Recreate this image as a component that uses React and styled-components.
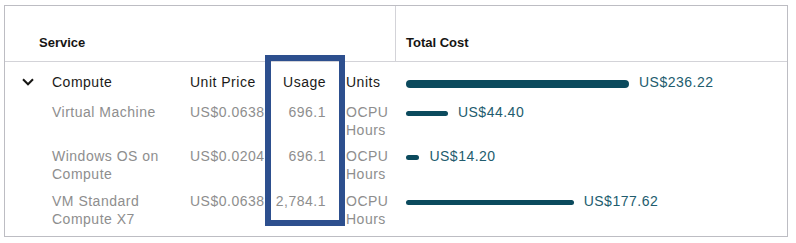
import React from "react";
import styled, { createGlobalStyle } from "styled-components";

const Global = createGlobalStyle`
  html, body { margin: 0; padding: 0; background: #ffffff; }
  body { padding: 5px 0 0 4px; font-family: "Liberation Sans", Arial, sans-serif; }
`;

const COLS = "47px 138px 80px 56px 70px 1fr";
const SCALE = 0.944;

const Table = styled.div`
  position: relative;
  width: 784px;
  box-sizing: border-box;
  border: 1px solid #bdbdc3;
  background: #fff;
`;

const Header = styled.div`
  display: grid;
  grid-template-columns: 391px 1fr;
  height: 56px;
  box-sizing: border-box;
  border-bottom: 1px solid #d3d3d8;
`;

const HeadCell = styled.div`
  display: flex;
  align-items: flex-end;
  padding: 0 0 10px ${(p) => p.$pad}px;
  font-size: 13px;
  line-height: 16px;
  font-weight: 700;
  color: #161513;
  border-right: ${(p) => (p.$divider ? "1px solid #d3d3d8" : "none")};
`;

const Body = styled.div`
  padding-bottom: 4px;
`;

const Row = styled.div`
  display: grid;
  grid-template-columns: ${COLS};
  align-items: start;
  padding: ${(p) => (p.$group ? "11px 0 8px" : "4.15px 0")};
  font-size: 14px;
  line-height: 18px;
  letter-spacing: 0.5px;
  color: ${(p) => (p.$group ? "#1b1a18" : "#8e8e8e")};
`;

const Cell = styled.div`
  text-align: ${(p) => (p.$right ? "right" : "left")};
  padding-left: ${(p) => p.$pad || 0}px;
  white-space: ${(p) => (p.$nowrap ? "nowrap" : "normal")};
`;

const ChevronCell = styled.div`
  height: 18px;
  display: flex;
  align-items: center;
  padding-left: 17px;
`;

const CostCell = styled.div`
  display: flex;
  align-items: center;
  gap: 10px;
  padding-left: 10px;
  height: 18px;
`;

const Bar = styled.div`
  height: ${(p) => (p.$thick ? 8 : 5)}px;
  border-radius: 4px;
  background: #0b4a5d;
  margin-top: 3px;
  flex: none;
`;

const Amount = styled.span`
  color: #225c6e;
  letter-spacing: 0.5px;
  white-space: nowrap;
`;

const Highlight = styled.div`
  position: absolute;
  left: 260px;
  top: 49px;
  width: 80px;
  height: 171px;
  box-sizing: border-box;
  border: 6px solid #2d4f8e;
  pointer-events: none;
`;

const Chevron = () => (
  <svg width="12" height="8" viewBox="0 0 12 8" fill="none">
    <path d="M1 1.3 L6 6.3 L11 1.3" stroke="#161513" strokeWidth="2" />
  </svg>
);

const rows = [
  { name: "Virtual Machine", price: "US$0.0638", usage: "696.1", cost: 44.4 },
  { name: "Windows OS on Compute", price: "US$0.0204", usage: "696.1", cost: 14.2 },
  { name: "VM Standard Compute X7", price: "US$0.0638", usage: "2,784.1", cost: 177.62 },
];

const fmt = (v) => "US$" + v.toFixed(2);

export default function App() {
  return (
    <>
      <Global />
      <Table>
        <Header>
          <HeadCell $pad={34} $divider>Service</HeadCell>
          <HeadCell $pad={10}>Total Cost</HeadCell>
        </Header>
        <Body>
          <Row $group>
            <ChevronCell>
              <Chevron />
            </ChevronCell>
            <Cell>Compute</Cell>
            <Cell $nowrap>Unit Price</Cell>
            <Cell $right>Usage</Cell>
            <Cell $pad={20}>Units</Cell>
            <CostCell>
              <Bar $thick style={{ width: 236.22 * SCALE }} />
              <Amount>{fmt(236.22)}</Amount>
            </CostCell>
          </Row>
          {rows.map((r) => (
            <Row key={r.name}>
              <div />
              <Cell>{r.name}</Cell>
              <Cell $nowrap>{r.price}</Cell>
              <Cell $right $nowrap>{r.usage}</Cell>
              <Cell $pad={20}>OCPU Hours</Cell>
              <CostCell>
                <Bar style={{ width: r.cost * SCALE }} />
                <Amount>{fmt(r.cost)}</Amount>
              </CostCell>
            </Row>
          ))}
        </Body>
        <Highlight />
      </Table>
    </>
  );
}
